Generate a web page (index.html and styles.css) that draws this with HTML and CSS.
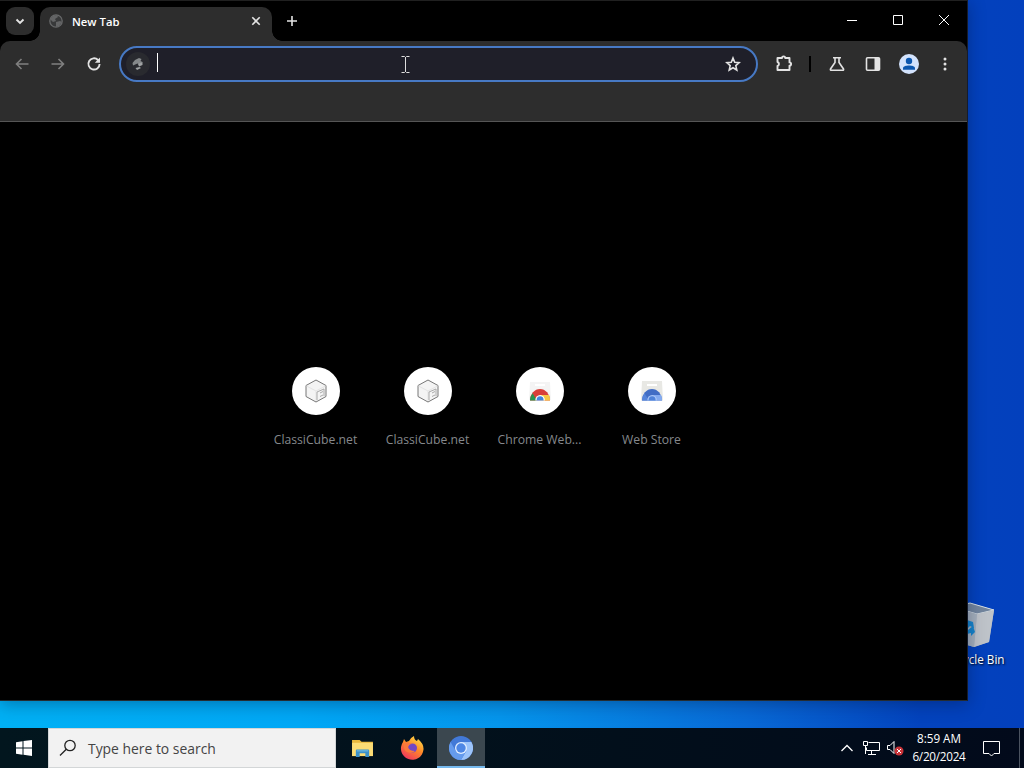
FILE: index.html
```html
<!DOCTYPE html>
<html lang="en-US">
  <head>
    <meta charset="utf-8" />

    <title>New Tab</title>

    <link rel="stylesheet" href="styles.css">
  </head>

  <body>
    <div class="desktop">
      <div class="recycle">
        <svg width="48" height="48" viewBox="0 0 48 48">
          <path d="M5 5 22 1 46 8 41 40 26 45 9 40z" fill="#a9b3bd"/>
          <path d="M5 5 22 1 46 8 29 12z" fill="#72859d" stroke="#d5dee5"/>
          <path d="M29 12 46 8 41 40 26 45z" fill="#bec3c9"/>
          <path d="M5 5 29 12 26 45 9 40z" fill="#a5b0bc"/>
          <path d="M19 18l6 2 1 6-4-2-3 3zM25 24l2 6-4 4v-3l-4 1 1-4zM9 27l5 2v4l-4-2z" fill="#1684cb"/>
        </svg>
        <span>Recycle Bin</span>
      </div>

      <div class="window">
        <div class="titlebar">
          <button class="tab-search" aria-label="Search tabs">
            <svg width="10" height="7" viewBox="0 0 10 7"><path d="M1.500 1.500 5 5l3.500-3.500" class="line bold"/></svg>
          </button>
          <div class="tab">
            <svg class="globe" width="14" height="14" viewBox="0 0 14 14">
              <circle cx="7" cy="7" r="6.200" fill="#38393a" stroke="#68696a" stroke-width="1.300"/>
              <path d="M1 5 4 2l4-1 1 2-3 2 1 2-3 1zM7 8l4-1 2 1-3 4-3 1z" fill="#636465"/>
            </svg>
            <span class="tab-title">New Tab</span>
            <svg width="10" height="10" viewBox="0 0 10 10"><path d="M1.300 1.300l7.400 7.400m0-7.400-7.400 7.400" class="line"/></svg>
          </div>
          <svg class="plus" width="12" height="12" viewBox="0 0 12 12"><path d="M6 1v10M1 6h10" class="line"/></svg>
          <div class="window-buttons">
            <svg width="10" height="10" viewBox="0 0 10 10"><path d="M0 5.500h10" class="thin"/></svg>
            <svg width="10" height="10" viewBox="0 0 10 10"><path d="M.500.500h9v9h-9z" class="thin"/></svg>
            <svg width="10" height="10" viewBox="0 0 10 10"><path d="M0 0l10 10M10 0 0 10" class="thin"/></svg>
          </div>
        </div>

        <div class="toolbar">
          <div class="nav">
            <svg class="off" width="16" height="16" viewBox="0 0 16 16"><path d="M14.500 8H2.500m5-5-5 5 5 5" class="line"/></svg>
            <svg class="off" width="16" height="16" viewBox="0 0 16 16"><path d="M1.500 8h12m-5-5 5 5-5 5" class="line"/></svg>
            <svg width="16" height="16" viewBox="0 0 16 16"><path d="M13.600 8A5.600 5.600 0 1 1 12 4l1.300 1.500" class="line bold"/><path d="M14 1.500V6.700H8.800z" fill="#e3e3e3"/></svg>
          </div>
          <div class="omnibox">
            <div class="site-icon">
              <svg width="14" height="14" viewBox="0 0 14 14">
                <path d="M1.500 6 4 3l4-2 2.500 1-1 2 2 1-3 2.500-2-1-4.500 2z" fill="#85888a"/>
                <path d="M7 7 11.500 5v3l-3.500 1.500zM4.500 11l4-1 1.500 1-4 2z" fill="#a0a3a4"/>
              </svg>
            </div>
            <span class="caret"></span>
            <svg class="star" width="16" height="16" viewBox="0 0 16 16"><path d="M8 2l1.700 4.200 4.500.4-3.400 3 1 4.400L8 11.700 4.200 14l1-4.400-3.400-3 4.500-.4z" class="line"/></svg>
          </div>
          <div class="actions">
            <svg class="puzzle" width="18" height="18" viewBox="0 0 18 18"><path d="M2.500 4H7a1.600 1.600 0 0 1 3.200 0H14.500v4.400a1.600 1.600 0 0 1 0 3.200V16h-12v-4a2.100 2.100 0 0 0 0-4z" class="line bold" stroke-linejoin="round"/></svg>
            <span class="separator"></span>
            <svg class="flask" width="16" height="16" viewBox="0 0 16 16"><path d="M4 1.700h8M6 2v4.500L1.500 13q-.5 1.300 1 1.300h11q1.500 0 1-1.300L10 6.500V2" class="line"/></svg>
            <svg class="panel" width="16" height="16" viewBox="0 0 16 16"><rect x="1.500" y="1.800" width="13" height="12.400" rx="1" class="line"/><path d="M9.500 2H14v12H9.500z" fill="#e3e3e3"/></svg>
            <svg class="profile" width="20" height="20" viewBox="0 0 20 20"><circle cx="10" cy="10" r="10" fill="#d3e3fd"/><circle cx="10" cy="7" r="3.200" fill="#0b57b0"/><path d="M4 15.700v-1.500c0-3.500 12-3.500 12 0v1.500z" fill="#0b57b0"/></svg>
            <svg class="dots" width="16" height="16" viewBox="0 0 16 16" fill="#e3e3e3"><circle cx="8" cy="3" r="1.500"/><circle cx="8" cy="8" r="1.500"/><circle cx="8" cy="13" r="1.500"/></svg>
          </div>
        </div>

        <div class="page">
          <div class="shortcut">
            <div class="circle">
              <svg width="22" height="24" viewBox="0 0 22 24"><path d="M11 1l10 5.500v11L11 23 1 17.500v-11z" fill="#f4f4f4" stroke="#777"/><path d="M1.500 7l9.500 5 9.500-5M11 12v10" fill="none" stroke="#e4e4e4"/><path d="M12 21v-8l7-3v7" fill="none" stroke="#aaa"/><path d="M15 14l3-1.500m-3 5 3-1.500" fill="none" stroke="#aaa"/></svg>
            </div>
            <span>ClassiCube.net</span>
          </div>
          <div class="shortcut">
            <div class="circle">
              <svg width="22" height="24" viewBox="0 0 22 24"><path d="M11 1l10 5.500v11L11 23 1 17.500v-11z" fill="#f4f4f4" stroke="#777"/><path d="M1.500 7l9.500 5 9.500-5M11 12v10" fill="none" stroke="#e4e4e4"/><path d="M12 21v-8l7-3v7" fill="none" stroke="#aaa"/><path d="M15 14l3-1.500m-3 5 3-1.500" fill="none" stroke="#aaa"/></svg>
            </div>
            <span>ClassiCube.net</span>
          </div>
          <div class="shortcut">
            <div class="circle">
              <svg width="24" height="24" viewBox="0 0 24 24">
                <path d="M2 3h20l1 18H1z" fill="#f4f4f4"/><path d="M7 5h10v2H7z" fill="#fff"/>
                <path d="M2 21.500a10 11.500 0 0 1 20 0z" fill="#d93f3a"/>
                <path d="M2 21.500q0-4 2.500-7.300L9 21.500z" fill="#279651"/>
                <path d="M12 16h9q1 2.500 1 5.500H12z" fill="#f6c845"/>
                <path d="M7.300 21.500a4.800 5.500 0 0 1 9.600 0z" fill="#fff"/><path d="M8.600 21.500a3.500 4.200 0 0 1 7 0z" fill="#4285dd"/>
              </svg>
            </div>
            <span>Chrome Web...</span>
          </div>
          <div class="shortcut">
            <div class="circle">
              <svg width="24" height="24" viewBox="0 0 24 24">
                <path d="M2 2h20l1 19.500H1z" fill="#e8e8e4"/><path d="M7 5h10v2H7z" fill="#fff"/>
                <path d="M2 21.500a10 11.500 0 0 1 20 0z" fill="#416dc5"/>
                <path d="M2 21.500q0-4 2.500-7.300L9 21.500z" fill="#5584da"/>
                <path d="M12 16h9q1 2.500 1 5.500H12z" fill="#83aaf0"/>
                <path d="M7.300 21.500a4.800 5.500 0 0 1 9.600 0z" fill="#a8c5f6"/><path d="M8.600 21.500a3.500 4.200 0 0 1 7 0z" fill="#4f82da"/>
              </svg>
            </div>
            <span>Web Store</span>
          </div>
        </div>
      </div>

      <svg class="pointer" width="9" height="17" viewBox="0 0 9 17"><path d="M.500.500h3l1 1 1-1h3M4.500 1v15M.500 16.500h3l1-1 1 1h3" fill="none" stroke="#ddd"/></svg>
    </div>

    <div class="taskbar">
      <div class="start">
        <svg width="16" height="16" viewBox="0 0 16 16" fill="#fff"><path d="M0 2.200 6.500 1.300V7.500H0zM7.500 1.100 16 0v7.500H7.500zM0 8.500h6.500v6.200L0 13.800zM7.500 8.500H16V16l-8.500-1.200z"/></svg>
      </div>
      <div class="search">
        <svg width="18" height="18" viewBox="0 0 18 18"><circle cx="11" cy="6.500" r="5.200" fill="none" stroke="#222" stroke-width="1.300"/><path d="M7.300 10.200 1 16.500" stroke="#222" stroke-width="1.300"/></svg>
        <span>Type here to search</span>
      </div>
      <div class="app">
        <svg width="23" height="19" viewBox="0 0 24 20">
          <path d="M1 1h8l2 2h12v15H1z" fill="#e9b83d"/><path d="M1 4h22v14H1z" fill="#fbdc75"/>
          <path d="M5 19v-7q0-1 1-1h12q1 0 1 1v7h-4v-4H9v4z" fill="#3b91ca"/><path d="M6 12h12v1H6z" fill="#7bc3e6"/>
        </svg>
      </div>
      <div class="app">
        <svg width="24" height="24" viewBox="0 0 24 24">
          <defs><linearGradient id="fox" x1=".8" y1="0" x2=".2" y2="1"><stop offset="0" stop-color="#ffe34a"/><stop offset=".45" stop-color="#ff8a28"/><stop offset="1" stop-color="#ef2f62"/></linearGradient></defs>
          <path d="M3 6l1-3 2 3 3-1q1-3 5-5 0 4 3 5l1-2q6 5 5.500 10.500A11.300 11.300 0 1 1 3 6z" fill="url(#fox)"/>
          <circle cx="12.500" cy="12" r="4.500" fill="#7447c5"/><path d="M4 7q4-2 8 1-4 0-4 3 1 4 7 4-3 3-8 1Q3 14 4 7z" fill="#fa793c"/>
        </svg>
      </div>
      <div class="app active">
        <svg width="24" height="24" viewBox="0 0 24 24"><circle cx="12" cy="12" r="12" fill="#4279d7"/><path d="M12 6h10.400A12 12 0 0 1 12 24l5.200-9z" fill="#9dc4fa"/><path d="M1.600 6A12 12 0 0 0 12 24l5.200-9H6.800z" fill="#659bed"/><circle cx="12" cy="12" r="6" fill="#e0edff"/><circle cx="12" cy="12" r="4.700" fill="#4e87e5"/></svg>
      </div>
      <div class="tray">
        <svg width="14" height="8" viewBox="0 0 14 8"><path d="M1.500 7 7 1.500 12.500 7" class="thin heavy"/></svg>
        <svg class="network" width="17" height="14" viewBox="0 0 17 14"><path d="M5.500 1.500h11v8H3.500v-3M8.500 10v3M5 13.500h8M.500.500h4v4h-4zM2.500 5v8" class="thin"/></svg>
        <svg class="volume" width="17" height="16" viewBox="0 0 17 16"><path d="M.500 5.500H3l4-4v12l-4-4H.500z" class="thin"/><circle cx="12" cy="11" r="4.500" fill="#c93338"/><path d="M10 9l4 4m0-4-4 4" class="thin"/></svg>
        <div class="clock">
          <span>8:59 AM</span>
          <span class="date">6/20/2024</span>
        </div>
        <svg class="notes" width="17" height="17" viewBox="0 0 17 17"><path d="M.500 1.500h16v12H11L8.500 16 6 13.500H.500z" class="thin"/></svg>
      </div>
    </div>
  </body>
</html>
```
FILE: styles.css
```css
* {
    box-sizing: border-box;
}

body {
    width: 1024px;
    height: 768px;
    margin: 0;
    overflow: hidden;
    font-family: "Open Sans", "Noto Sans", sans-serif;
    font-size: 12px;
    color: white;
}

svg {
    display: block;
    flex-shrink: 0;
}

.line {
    fill: none;
    stroke: #e3e3e3;
    stroke-width: 1.6;
}

.bold {
    stroke-width: 1.9;
}

.thin {
    fill: none;
    stroke: white;
    stroke-width: 1;
}

.heavy {
    stroke-width: 1.3;
}

/* desktop */
.desktop {
    position: relative;
    height: 728px;
    background: linear-gradient(90deg, #00b0f4 0, #00a7f5 300px, #0595ec 500px, #0868d5 750px, #0343bd 920px, #0340bd 1024px);
}

.window {
    position: relative;
    width: 968px;
    height: 701px;
    background-color: black;
    border-top: 1px solid #202020;
    border-right: 1px solid #151c2b;
    border-bottom: 1px solid #242b30;
    box-shadow: 0 3px 16px rgba(0, 15, 50, 0.35);
}

.recycle {
    position: absolute;
    left: 936px;
    top: 602px;
    width: 76px;
    display: flex;
    flex-direction: column;
    align-items: center;
    text-shadow: 1px 1px 2px black;
}

.recycle svg {
    margin: 0 26px 1px 0;
    transform: translateX(11px);
}

.recycle span {
    font-size: 11.7px;
    line-height: 16px;
}

.pointer {
    position: absolute;
    left: 401px;
    top: 56px;
}

/* title bar */
.titlebar {
    display: flex;
    height: 40px;
    padding: 6px 0 0 6px;
}

.tab-search {
    display: flex;
    align-items: center;
    justify-content: center;
    width: 28px;
    height: 28px;
    padding: 0;
    border: 0;
    border-radius: 9px;
    background-color: #2d2d2d;
}

.tab {
    position: relative;
    display: flex;
    align-items: center;
    width: 232px;
    height: 34px;
    margin-left: 6px;
    padding: 0 11px 6px 9px;
    border-radius: 10px 10px 0 0;
    background-color: #2d2d2d;
}

.tab::before,
.tab::after {
    content: "";
    position: absolute;
    bottom: 0;
    width: 10px;
    height: 10px;
}

.tab::before {
    left: -10px;
    background: radial-gradient(circle at 0 0, transparent 9.5px, #2d2d2d 10px);
}

.tab::after {
    right: -10px;
    background: radial-gradient(circle at 100% 0, transparent 9.5px, #2d2d2d 10px);
}

.tab-title {
    flex: 1;
    margin-left: 9px;
    font-size: 11.3px;
    font-weight: 600;
}

.plus {
    margin: 8px 0 0 14px;
}

.window-buttons {
    display: flex;
    gap: 36px;
    margin: 8px 18px 0 auto;
}

/* toolbar */
.toolbar {
    display: flex;
    align-items: flex-start;
    height: 81px;
    padding-top: 5px;
    border-bottom: 1px solid #555;
    border-radius: 10px 10px 0 0;
    background-color: #2d2d2d;
}

.nav {
    display: flex;
    gap: 20px;
    width: 119px;
    padding: 10px 0 0 14px;
}

.off {
    opacity: 0.45;
}

.omnibox {
    display: flex;
    align-items: center;
    width: 639px;
    height: 36px;
    padding: 0 15px 0 7px;
    border: 2px solid #4779c4;
    border-radius: 18px;
    background-color: #1f1f29;
}

.site-icon {
    display: flex;
    align-items: center;
    justify-content: center;
    width: 24px;
    height: 24px;
    margin-left: -2px;
    border-radius: 12px;
    background-color: #292a2f;
}

.caret {
    width: 1px;
    height: 19px;
    margin: 0 0 3px 7px;
    background-color: white;
}

.star {
    margin-left: auto;
}

.actions {
    display: flex;
    align-items: center;
    height: 36px;
}

.puzzle {
    margin: 0 0 2px 17px;
}

.separator {
    width: 2px;
    height: 16px;
    margin: 0 18px 0 16px;
    background-color: black;
}

.flask,
.panel {
    margin-right: 20px;
}

.profile {
    margin: 0 18px 0 -2px;
}

/* new tab page */
.page {
    display: flex;
    justify-content: center;
    padding: 245px 0 0 0;
}

.shortcut {
    display: flex;
    flex-direction: column;
    align-items: center;
    width: 112px;
    color: #85888c;
    font-size: 12.2px;
}

.shortcut span {
    margin-top: 16px;
    line-height: 18px;
}

.circle {
    display: flex;
    align-items: center;
    justify-content: center;
    width: 48px;
    height: 48px;
    border-radius: 50%;
    background-color: white;
}

/* taskbar */
.taskbar {
    display: flex;
    height: 40px;
    background: linear-gradient(90deg, #02161e, #020f1b 60%, #020a1b);
}

.start {
    display: flex;
    align-items: center;
    justify-content: center;
    width: 48px;
}

.search {
    display: flex;
    align-items: center;
    width: 288px;
    padding-left: 10px;
    border: 1px solid #d3d6d7;
    background-color: #f2f2f2;
    color: #444;
    font-size: 13.9px;
}

.search span {
    margin-left: 11px;
}

.app {
    display: flex;
    align-items: center;
    justify-content: center;
    width: 49px;
    margin-left: 2px;
}

.app + .app {
    margin-left: 0;
}

.app + .active {
    width: 48px;
    margin-left: 1px;
    border-bottom: 2px solid #76b9ed;
    background-color: #3b474f;
}

.active svg {
    margin-top: 2px;
}

.tray {
    display: flex;
    align-items: center;
    width: 180px;
    margin: 0 4px 0 auto;
    border-right: 1px solid #4b5360;
}

.network {
    margin-left: 9px;
}

.volume {
    margin-left: 7px;
}

.clock {
    display: flex;
    flex-direction: column;
    align-items: center;
    width: 70px;
    margin-bottom: 2px;
    font-size: 11.7px;
    line-height: 18px;
}

.date {
    letter-spacing: -0.25px;
}

.notes {
    margin-left: 9px;
}
```
